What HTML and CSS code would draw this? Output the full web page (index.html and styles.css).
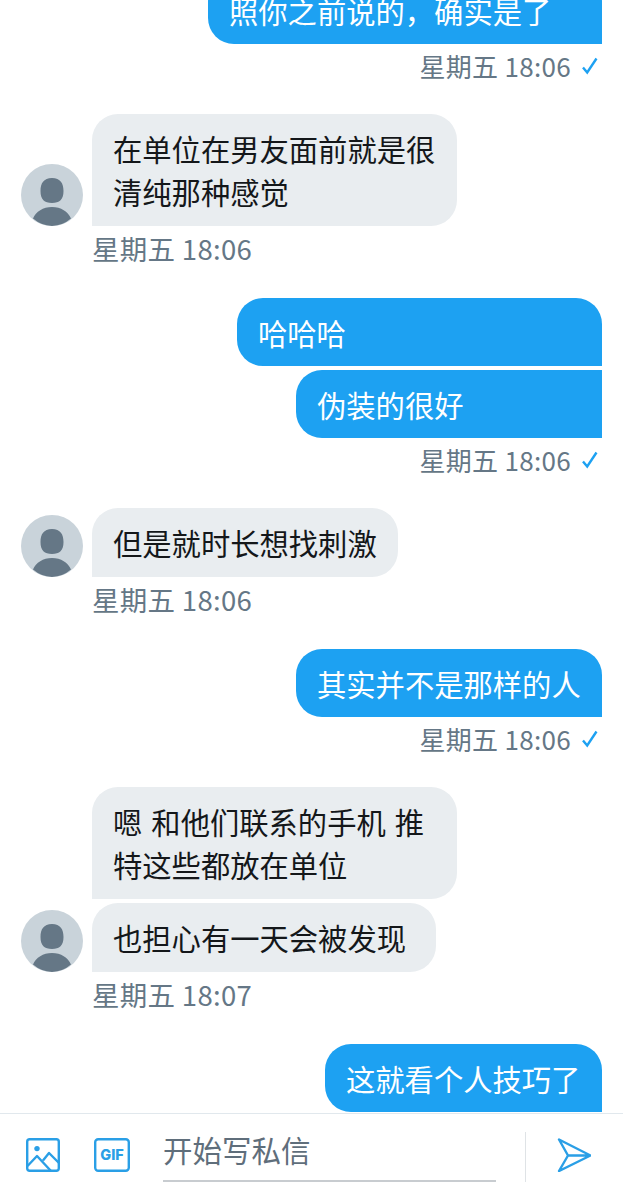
FILE: index.html
```html
<!DOCTYPE html>
<html lang="zh-CN">
<head>
<meta charset="utf-8">
<title>私信</title>
<link rel="stylesheet" href="styles.css">
</head>
<body>
<main class="page">
  <section class="thread">
    <div class="group out">
      <div class="bubble w-394">照你之前说的&#xFF0C;确实是了</div>
      <div class="meta">星期五 18:06 <svg class="tick" viewBox="0 0 18 18"><path d="M2 10.500 6.200 15.500 15.500 1.500"/></svg></div>
    </div>
    <div class="group in">
      <div class="row">
        <svg class="avatar" viewBox="0 0 62 62"><circle cx="31" cy="31" r="31" fill="#c9d3da"/><path fill="#657786" d="M31 14c8.500 0 11.500 5.500 11.500 13 0 8.500-4 12-11.500 12S19.500 35.500 19.500 27c0-7.500 3-13 11.500-13zM12 54.500C15 47.500 22 43 31 43S47 47.500 50 54.500A31 31 0 0 1 31 62a31 31 0 0 1-19-7.500z"/></svg>
        <div class="stack">
          <div class="bubble w-365">在单位在男友面前就是很<br>清纯那种感觉</div>
        </div>
      </div>
      <div class="meta">星期五 18:06</div>
    </div>
    <div class="group out">
      <div class="bubble w-365 first">哈哈哈</div>
      <div class="bubble w-306 last">伪装的很好</div>
      <div class="meta">星期五 18:06 <svg class="tick" viewBox="0 0 18 18"><path d="M2 10.500 6.200 15.500 15.500 1.500"/></svg></div>
    </div>
    <div class="group in">
      <div class="row">
        <svg class="avatar" viewBox="0 0 62 62"><circle cx="31" cy="31" r="31" fill="#c9d3da"/><path fill="#657786" d="M31 14c8.500 0 11.500 5.500 11.500 13 0 8.500-4 12-11.500 12S19.500 35.500 19.500 27c0-7.500 3-13 11.500-13zM12 54.500C15 47.500 22 43 31 43S47 47.500 50 54.500A31 31 0 0 1 31 62a31 31 0 0 1-19-7.500z"/></svg>
        <div class="stack">
          <div class="bubble w-306">但是就时长想找刺激</div>
        </div>
      </div>
      <div class="meta">星期五 18:06</div>
    </div>
    <div class="group out">
      <div class="bubble w-306">其实并不是那样的人</div>
      <div class="meta">星期五 18:06 <svg class="tick" viewBox="0 0 18 18"><path d="M2 10.500 6.200 15.500 15.500 1.500"/></svg></div>
    </div>
    <div class="group in">
      <div class="row">
        <svg class="avatar" viewBox="0 0 62 62"><circle cx="31" cy="31" r="31" fill="#c9d3da"/><path fill="#657786" d="M31 14c8.500 0 11.500 5.500 11.500 13 0 8.500-4 12-11.500 12S19.500 35.500 19.500 27c0-7.500 3-13 11.500-13zM12 54.500C15 47.500 22 43 31 43S47 47.500 50 54.500A31 31 0 0 1 31 62a31 31 0 0 1-19-7.500z"/></svg>
        <div class="stack">
          <div class="bubble w-365">嗯 和他们联系的手机 推<br>特这些都放在单位</div>
          <div class="bubble w-344">也担心有一天会被发现</div>
        </div>
      </div>
      <div class="meta">星期五 18:07</div>
    </div>
    <div class="group out tail">
      <div class="bubble w-277">这就看个人技巧了</div>
    </div>
  </section>
  <footer class="composer">
    <svg class="tool photo" viewBox="0 0 34 34"><rect x="1.200" y="1.200" width="31.600" height="31.600" rx="2.500"/><circle class="dot" cx="11" cy="10.600" r="2.700"/><path d="M1.500 28 11 18 25 33M17 22.500 23 15 33 25"/></svg>
    <svg class="tool gif" viewBox="0 0 36 34"><rect x="1.200" y="1.200" width="33.600" height="31.600" rx="3"/><text x="18" y="22.300" text-anchor="middle">GIF</text></svg>
    <div class="field">开始写私信</div>
    <div class="divider"></div>
    <svg class="tool send" viewBox="0 0 34 34"><path d="M2 1.500 33.500 17.500 2 33 11 17.500zM11 17.500H33.500"/></svg>
  </footer>
</main>
</body>
</html>
```

FILE: styles.css
```css
* { box-sizing: border-box; }
html, body { margin: 0; padding: 0; background: #fff; }
body { font-family: "Noto Sans CJK SC", "Noto Sans", sans-serif; }
.page { height: 1200px; display: flex; flex-direction: column; overflow: hidden; }
.thread { flex: 1; min-height: 0; display: flex; flex-direction: column; justify-content: flex-end; overflow: hidden; padding: 0 21px 1px; }
.group { display: flex; flex-direction: column; gap: 4px; margin-top: 31px; flex: none; }
.group.out { align-items: flex-end; }
.row { display: flex; align-items: flex-end; gap: 9px; }
.stack { display: flex; flex-direction: column; gap: 4px; align-items: flex-start; }
.avatar { width: 62px; height: 62px; flex: none; }
.bubble { padding: 12.500px 21px; font-size: 29.300px; line-height: 43px; border-radius: 26px; white-space: nowrap; word-spacing: 2.500px; }
.in .bubble { padding: 13px 21px; background: #e9edf0; color: #14171a; border-bottom-left-radius: 0; }
.out .bubble { background: #1da1f2; color: #fff; border-bottom-right-radius: 0; }
.out .bubble.last { border-top-right-radius: 0; }
.w-394 { width: 394px; }
.w-365 { width: 365px; }
.w-344 { width: 344px; }
.w-306 { width: 306px; }
.w-277 { width: 277px; }
.meta { font-size: 26px; line-height: 34px; color: #657786; display: flex; align-items: center; gap: 10px; letter-spacing: 0.300px; }
.out .meta { padding-right: 3px; margin-top: 1px; }
.in .meta { padding-left: 71px; margin-top: 1px; margin-bottom: 2px; font-size: 27.500px; }
.tick { width: 18px; height: 18px; fill: none; stroke: #1da1f2; stroke-width: 2.400; }
.composer { flex: none; height: 87px; border-top: 1px solid #e1e8ed; display: flex; align-items: flex-start; padding: 24px 33px 0 26px; background: #fff; }
.tool { fill: none; stroke: #2a9fe6; stroke-width: 2.400; stroke-linejoin: round; flex: none; }
.photo { width: 34px; height: 34px; }
.photo .dot { fill: #2a9fe6; stroke: none; }
.gif { width: 36px; height: 34px; margin-left: 34px; }
.gif text { fill: #2a9fe6; stroke: none; font-family: "Inter", "Liberation Sans", sans-serif; font-size: 14.500px; font-weight: 800; }
.field { width: 333px; height: 51px; margin: -7px 0 0 33px; font-size: 29.500px; line-height: 36px; color: #5f6e7b; border-bottom: 2px solid #c8ccd0; flex: none; }
.divider { width: 1px; height: 50px; margin: -6px 0 0 29px; background: #dfe3e6; flex: none; }
.send { width: 34px; height: 34px; margin-left: 31px; }
```
